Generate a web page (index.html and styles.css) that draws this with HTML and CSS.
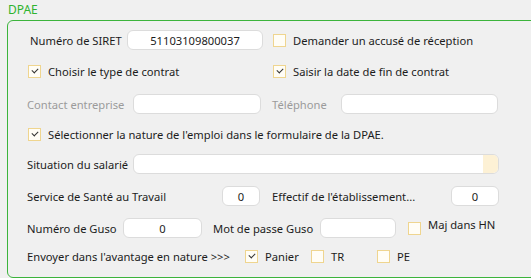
FILE: index.html
```html
<!DOCTYPE html>
<html lang="fr">
<head>
    <meta charset="UTF-8">
    <title>DPAE</title>
    <link rel="stylesheet" href="styles.css">
</head>
<body>

    <div class="groupe">
        <div class="titre">DPAE</div>
        <div class="cadre">

            <!-- SIRET + accusé -->
            <div class="ligne l1">
                <div class="gauche">
                    <span class="lib siret-lib">Numéro de SIRET</span>
                    <span class="champ siret">51103109800037</span>
                </div>
                <label class="case"><span class="boite"></span>Demander un accusé de réception</label>
            </div>

            <!-- type de contrat / date de fin -->
            <div class="ligne l2">
                <div class="gauche">
                    <label class="case"><span class="boite coche"></span>Choisir le type de contrat</label>
                </div>
                <label class="case"><span class="boite coche"></span>Saisir la date de fin de contrat</label>
            </div>

            <!-- contact / téléphone (désactivés) -->
            <div class="ligne l3">
                <div class="gauche">
                    <span class="lib gris contact-lib">Contact entreprise</span>
                    <span class="champ contact"></span>
                </div>
                <span class="lib gris tel-lib">Téléphone</span>
                <span class="champ tel"></span>
            </div>

            <div class="ligne l4">
                <label class="case"><span class="boite coche"></span>Sélectionner la nature de l'emploi dans le formulaire de la DPAE.</label>
            </div>

            <div class="ligne l5">
                <span class="lib situation-lib">Situation du salarié</span>
                <span class="champ situation"><span class="bouton"></span></span>
            </div>

            <div class="ligne l6">
                <div class="gauche">
                    <span class="lib sante-lib">Service de Santé au Travail</span>
                    <span class="champ sante">0</span>
                </div>
                <span class="lib effectif-lib">Effectif de l'établissement...</span>
                <span class="champ effectif">0</span>
            </div>

            <div class="ligne l7">
                <span class="lib guso-lib">Numéro de Guso</span>
                <span class="champ guso">0</span>
                <span class="lib mdp-lib">Mot de passe Guso</span>
                <span class="champ mdp"></span>
                <label class="case maj"><span class="boite"></span><span class="maj-txt">Maj dans HN</span></label>
            </div>

            <div class="ligne l8">
                <span class="lib avantage-lib">Envoyer dans l'avantage en nature &gt;&gt;&gt;</span>
                <label class="case panier"><span class="boite coche"></span>Panier</label>
                <label class="case tr"><span class="boite"></span>TR</label>
                <label class="case"><span class="boite"></span>PE</label>
            </div>

        </div>
    </div>

</body>
</html>
```

FILE: styles.css
```css
body {
    margin: 0;
    background: #f0f0f0;
    font-family: 'Noto Sans', 'Open Sans', sans-serif;
    font-size: 11.2px;
    color: #1c1c1c;
}

/* titre vert du groupe */
.titre {
    color: #2fb32f;
    font-size: 12px;
    line-height: 16px;
    padding: 2px 0 0 8px;
    height: 18px;
}

.cadre {
    margin: 0 0 0 7px;
    width: 510px;
    height: 247px;
    border: 1px solid #3cb43c;
    border-radius: 6px;
    padding: 9px 0 0 19px;
    box-sizing: content-box;
}

.ligne {
    display: flex;
    align-items: center;
    height: 20px;
}

.l2 { margin-top: 11px; }
.l3 { margin-top: 13px; }
.l4 { margin-top: 10px; }
.l5 { margin-top: 10px; }
.l6 { margin-top: 12px; }
.l7 { margin-top: 12px; }
.l8 { margin-top: 8px; }

.gauche {
    display: flex;
    align-items: center;
    width: 245px;
}

.lib {
    white-space: nowrap;
}

.gris {
    color: #9b9b9b;
}

/* zones de saisie */
.champ {
    display: flex;
    align-items: center;
    justify-content: center;
    height: 20px;
    box-sizing: border-box;
    background: #fff;
    border: 1px solid #dcdcdc;
    border-radius: 6px;
    color: #1c1c1c;
}

/* cases à cocher */
.case {
    display: flex;
    align-items: center;
    white-space: nowrap;
    margin-left: 1px;
}

.boite {
    position: relative;
    width: 13px;
    height: 13px;
    box-sizing: border-box;
    border: 1px solid #efd58f;
    background: #fffdf6;
    margin-right: 7px;
}

.coche::after {
    content: "";
    position: absolute;
    left: 3px;
    top: 2px;
    width: 5px;
    height: 3px;
    border-left: 1px solid #333;
    border-bottom: 1px solid #333;
    transform: rotate(-45deg);
}

.siret-lib { width: 97px; margin-left: 3px; }
.siret { width: 136px; }

.contact-lib { width: 106px; }
.contact { width: 128px; }
.tel-lib { width: 69px; }
.tel { width: 157px; }

.situation-lib { width: 106px; }
.situation {
    width: 366px;
    justify-content: flex-end;
    overflow: hidden;
}
.situation .bouton {
    width: 15px;
    height: 100%;
    background: #fdf1d5;
}

.sante-lib { width: 195px; }
.sante { width: 38px; }
.effectif-lib { width: 179px; }
.effectif { width: 48px; }

.guso-lib { width: 96px; }
.guso { width: 79px; }
.mdp-lib { width: 107px; margin-left: 11px; }
.mdp { width: 76px; }
.case.maj { margin-left: 12px; }
.maj-txt { position: relative; top: -4px; }

.avantage-lib { width: 217px; }
.panier { width: 65px; }
.tr { width: 65px; }
```
